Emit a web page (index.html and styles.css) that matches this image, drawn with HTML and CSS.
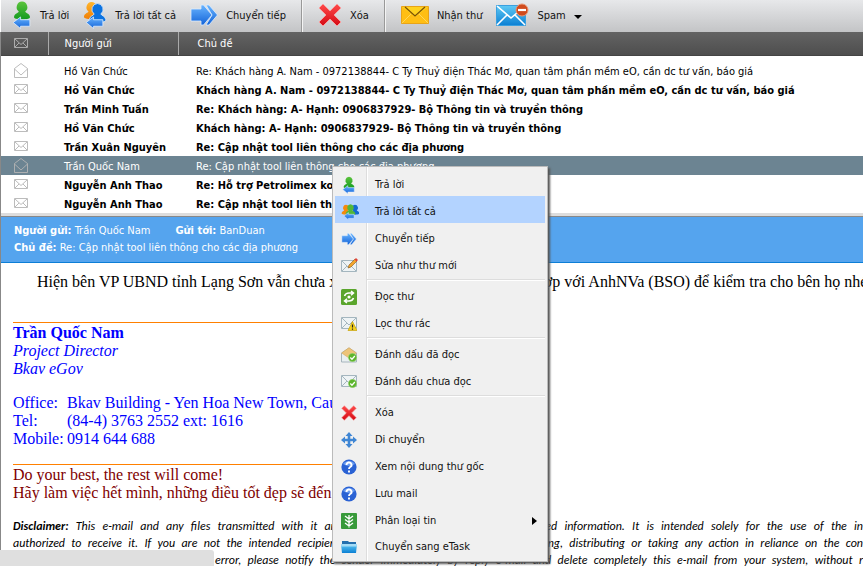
FILE: index.html
```html
<!DOCTYPE html>
<html lang="vi">
<head>
<meta charset="utf-8">
<title>Thư</title>
<link rel="stylesheet" href="styles.css">
</head>
<body>
<svg class="defs" width="0" height="0" aria-hidden="true">
  <defs>
    <linearGradient id="gGreen" x1="0" y1="0" x2="0" y2="1"><stop offset="0" stop-color="#5cc43c"/><stop offset="1" stop-color="#149a20"/></linearGradient>
    <linearGradient id="gBlue" x1="0" y1="0" x2="0" y2="1"><stop offset="0" stop-color="#68b4ff"/><stop offset="1" stop-color="#1464d8"/></linearGradient>
    <linearGradient id="gOrange" x1="0" y1="0" x2="0" y2="1"><stop offset="0" stop-color="#ffb52a"/><stop offset="1" stop-color="#f07f08"/></linearGradient>
    <linearGradient id="gRed" x1="0" y1="0" x2="0" y2="1"><stop offset="0" stop-color="#ff4a4a"/><stop offset="1" stop-color="#d40a14"/></linearGradient>
    <linearGradient id="gSky" x1="0" y1="0" x2="0" y2="1"><stop offset="0" stop-color="#5fc9f4"/><stop offset="1" stop-color="#0c80d4"/></linearGradient>
    <symbol id="person" viewBox="0 0 18 20"><path d="M9 .5a5.600 5.600 0 0 1 3.200 10c.3 1.500 4.300 1.800 4.800 5.500.2 1.600-3 2.500-8 2.500s-8.200-1-8-2.500c.5-3.700 4.500-4 4.800-5.500A5.600 5.600 0 0 1 9 .5z"/></symbol>
    <symbol id="back" viewBox="0 0 20 14"><path d="M1 7l8-6v3h10v7h-10v2.500z" fill="url(#gBlue)" stroke="#e6f2ff" stroke-width=".8"/></symbol>
    <symbol id="forward" viewBox="0 0 28 22"><path d="M16 1h3l8.500 10L19 21h-3l6-10z" fill="url(#gBlue)" stroke="#dcecff" stroke-width=".8"/><path d="M1 5h10V1h2.500L22 11l-8.500 10H11v-4H1z" fill="url(#gBlue)" stroke="#dcecff" stroke-width=".8"/></symbol>
    <symbol id="cross" viewBox="0 0 24 24"><path d="M5 1l7 7 7-7 4 4-7 7 7 7-4 4-7-7-7 7-4-4 7-7-7-7z" fill="url(#gRed)" stroke="#f6a0a0" stroke-width="1" stroke-linejoin="round"/></symbol>
    <symbol id="closed" viewBox="0 0 14 10"><path d="M.5.500h13v9H.500zM1 1l6 5.500L13 1M1 9l4-4M13 9L9 5" fill="none" stroke="currentColor" stroke-width=".9"/></symbol>
    <symbol id="open" viewBox="0 0 14 15"><path d="M.5 5.500v9h13v-9L7 .500zM.5 6L7 12l6.500-6" fill="none" stroke="currentColor" stroke-width=".9"/></symbol>
    <symbol id="mail" viewBox="0 0 16 16"><path d="M.5 2.500h15v11H.500z" fill="#eef3f5" stroke="#a4b6bf"/><path d="M1 3l7 7 7-7M1 13l5-5M15 13l-5-5" fill="none" stroke="#a4b6bf"/></symbol>
    <symbol id="tick" viewBox="0 0 10 10"><circle cx="5" cy="5" r="4.600" fill="#5cb52c" stroke="#a6da82" stroke-width=".6"/><path d="M2.600 5l1.800 1.900L7.600 3.300" fill="none" stroke="#fff" stroke-width="1.400"/></symbol>
    <symbol id="help" viewBox="0 0 16 16"><circle cx="8" cy="8" r="7.600" fill="#2a62d4"/><path d="M2 5a7 6 0 0 1 12 0q-6 4-12 0z" fill="#6a9cf0"/><path d="M5.500 6a2.500 2.400 0 1 1 3.700 2q-1.200.7-1.200 2M8 11.500v2" fill="none" stroke="#fff" stroke-width="1.900"/></symbol>
  </defs>
</svg>

<header class="toolbar">
  <div class="group">
    <button class="tool" type="button"><svg width="20" height="29" viewBox="0 0 20 29"><use href="#person" x="1" y="0" width="18" height="20" fill="url(#gGreen)"/><use href="#back" x="0" y="15" width="19" height="13"/></svg><span>Trả lời</span></button>
    <button class="tool" type="button"><svg width="24" height="29" viewBox="0 0 24 29"><use href="#person" x="0" y="0" width="17" height="20" fill="url(#gOrange)"/><use href="#person" x="5" y="2" width="19" height="21" fill="#0b72e0" stroke="#dfe9f5" stroke-width=".8"/><use href="#back" x="2" y="15" width="19" height="13"/></svg><span>Trả lời tất cả</span></button>
    <button class="tool" type="button"><svg width="28" height="22"><use href="#forward"/></svg><span>Chuyển tiếp</span></button>
  </div>
  <div class="group">
    <button class="tool" type="button"><svg width="24" height="24"><use href="#cross"/></svg><span>Xóa</span></button>
  </div>
  <div class="group">
    <button class="tool" type="button"><svg width="28" height="20" viewBox="0 0 28 20"><path d="M.5 1.500h27v17H.500z" fill="#ffbe14" stroke="#e8a418"/><path d="M1 18L10 9M27 18L18 9" stroke="#ffd75a"/><path d="M1 2h26L14 12z" fill="#ffd21e"/><path d="M4 2l10 9L24 2" fill="none" stroke="#7c5206" stroke-width="1.300"/></svg><span>Nhận thư</span></button>
    <button class="tool" type="button"><svg width="33" height="24" viewBox="0 0 33 24"><path d="M.5 2.500h29v20H.500z" fill="url(#gSky)" stroke="#3aa0e0"/><path d="M1 3l14 12L29 3M1 22l10-10M29 22L19 12" fill="none" stroke="#fff" stroke-width="1.600"/><circle cx="26" cy="7" r="6" fill="#d04a1c" stroke="#e89470"/><path d="M22 7h8" stroke="#fff" stroke-width="2.200"/></svg><span>Spam</span><svg class="caret" width="8" height="4"><path d="M0 0h8L4 4z"/></svg></button>
  </div>
</header>

<main class="client">
  <table class="mails">
    <thead>
      <tr><th class="status" aria-label="Trạng thái"><svg width="14" height="10"><use href="#closed"/></svg></th><th class="sender">Người gửi</th><th>Chủ đề</th></tr>
    </thead>
    <tbody>
      <tr class="unread clipped"><td class="status"></td><td><div>Hoàng Quý</div></td><td><div>Cấp phép sử dụng phần mềm, lịch họp dự án tại đơn vị, nâng cấp</div></td></tr>
      <tr><td class="status"><svg width="14" height="15"><use href="#open"/></svg></td><td>Hồ Văn Chức</td><td>Re: Khách hàng A. Nam - 0972138844- C Ty Thuỷ điện Thác Mơ, quan tâm phần mềm eO, cần dc tư vấn, báo giá</td></tr>
      <tr class="unread"><td class="status"><svg width="14" height="10"><use href="#closed"/></svg></td><td>Hồ Văn Chức</td><td>Khách hàng A. Nam - 0972138844- C Ty Thuỷ điện Thác Mơ, quan tâm phần mềm eO, cần dc tư vấn, báo giá</td></tr>
      <tr class="unread"><td class="status"><svg width="14" height="10"><use href="#closed"/></svg></td><td>Trần Minh Tuấn</td><td>Re: Khách hàng: A- Hạnh: 0906837929- Bộ Thông tin và truyền thông</td></tr>
      <tr class="unread"><td class="status"><svg width="14" height="10"><use href="#closed"/></svg></td><td>Hồ Văn Chức</td><td>Khách hàng: A- Hạnh: 0906837929- Bộ Thông tin và truyền thông</td></tr>
      <tr class="unread"><td class="status"><svg width="14" height="10"><use href="#closed"/></svg></td><td>Trần Xuân Nguyên</td><td>Re: Cập nhật tool liên thông cho các địa phương</td></tr>
      <tr class="selected"><td class="status"><svg width="14" height="15"><use href="#open"/></svg></td><td>Trần Quốc Nam</td><td>Re: Cập nhật tool liên thông cho các địa phương</td></tr>
      <tr class="unread"><td class="status"><svg width="14" height="10"><use href="#closed"/></svg></td><td>Nguyễn Anh Thao</td><td>Re: Hỗ trợ Petrolimex kon tum</td></tr>
      <tr class="unread"><td class="status"><svg width="14" height="10"><use href="#closed"/></svg></td><td>Nguyễn Anh Thao</td><td>Re: Cập nhật tool liên thông</td></tr>
    </tbody>
  </table>

  <section class="summary">
    <div class="people"><span><b>Người gửi:</b> Trần Quốc Nam</span><span><b>Gửi tới:</b> BanDuan</span></div>
    <div><b>Chủ đề:</b> Re: Cập nhật tool liên thông cho các địa phương</div>
  </section>

  <article class="message">
    <p class="lead">Hiện bên VP UBND tỉnh Lạng Sơn vẫn chưa xử lý được văn bản, chị đã phối hợp với AnhNVa (BSO) để kiểm tra cho bên họ nhé</p>
    <div class="signature">
      <b>Trần Quốc Nam</b>
      <i>Project Director</i>
      <i>Bkav eGov</i>
      <dl>
        <dt>Office:</dt><dd>Bkav Building - Yen Hoa New Town, Cau Giay</dd>
        <dt>Tel:</dt><dd>(84-4) 3763 2552 ext: 1616</dd>
        <dt>Mobile:</dt><dd>0914 644 688</dd>
      </dl>
    </div>
    <div class="motto">Do your best, the rest will come!<br>Hãy làm việc hết mình, những điều tốt đẹp sẽ đến</div>
    <div class="disclaimer">
      <p><b>Disclaimer:</b> This e-mail and any files transmitted with it are confidential and may contain privileged information. It is intended solely for the use of the in</p>
      <p>authorized to receive it. If you are not the intended recipient, you are notified that disclosing, copying, distributing or taking any action in reliance on the con</p>
      <p>If you have received this message in error, please notify the sender immediately by reply e-mail and delete completely this e-mail from your system, without r</p>
    </div>
  </article>
</main>

<nav class="menu" aria-label="Thao tác thư">
  <button type="button"><svg width="16" height="18" viewBox="0 0 16 18"><use href="#person" x="2" y="0" width="12" height="14" fill="url(#gGreen)"/><use href="#back" x="1" y="9" width="13" height="9"/></svg><span>Trả lời</span></button>
  <button type="button" class="active"><svg width="18" height="17" viewBox="0 0 18 17"><use href="#person" x="0" y="1" width="10" height="12" fill="#f58a0c"/><use href="#person" x="9" y="1" width="10" height="12" fill="#126bd2"/><use href="#person" x="4" y="0" width="11" height="14" fill="#52b838"/><use href="#back" x="2" y="9" width="12" height="8"/></svg><span>Trả lời tất cả</span></button>
  <button type="button"><svg width="16" height="12"><use href="#forward"/></svg><span>Chuyển tiếp</span></button>
  <button type="button"><svg width="17" height="16" viewBox="0 0 17 16"><use href="#mail" x="0" y="0" width="16" height="16"/><path d="M7 10l1-3 6-6 2 2-6 6z" fill="#f3a52c" stroke="#875a25" stroke-width=".6"/><path d="M13.500 1.500L15 0l2 2-1.500 1.500z" fill="#df4338"/></svg><span>Sửa như thư mới</span></button>
  <hr>
  <button type="button"><svg width="16" height="16" viewBox="0 0 16 16"><rect width="16" height="16" rx="1.500" fill="#5aa52c"/><path d="M3.500 7Q4.500 4 8 4h4M10 2l2.500 2L10 6.200M12.500 9Q11.500 12 8 12H4M6 9.800L3.500 12 6 14" fill="none" stroke="#fff" stroke-width="1.500"/><circle cx="8" cy="8" r="1.600" fill="#fff"/></svg><span>Đọc thư</span></button>
  <button type="button"><svg width="16" height="16" viewBox="0 0 16 16"><use href="#mail" x="0" y="-1" width="16" height="16"/><path d="M11.500 5.500L16 14.500H7z" fill="#f5d21e" stroke="#c6a20c" stroke-width=".7"/><path d="M11.500 8.500v3M11.500 12.500v1.200" stroke="#222" stroke-width="1.200"/></svg><span>Lọc thư rác</span></button>
  <hr>
  <button type="button"><svg width="16" height="16" viewBox="0 0 16 16"><path d="M.5 6L8 1l7.500 5v9H.500z" fill="#e9eff1" stroke="#a6b5bd"/><path d="M.7 6L8 .700 15.300 6 8 11z" fill="#edc47a" stroke="#d7a858" stroke-width=".6"/><use href="#tick" x="7" y="6" width="9" height="9"/></svg><span>Đánh dấu đã đọc</span></button>
  <button type="button"><svg width="16" height="16" viewBox="0 0 16 16"><use href="#mail" x="0" y="-1" width="16" height="16"/><use href="#tick" x="7" y="5" width="9" height="9"/></svg><span>Đánh dấu chưa đọc</span></button>
  <hr>
  <button type="button"><svg width="16" height="16"><use href="#cross"/></svg><span>Xóa</span></button>
  <button type="button"><svg width="16" height="16" viewBox="0 0 16 16"><path d="M8 0l3.500 4H9.300v2.700H12V4.500L16 8l-4 3.500V9.300H9.300V12h2.200L8 16l-3.500-4h2.200V9.300H4v2.200L0 8l4-3.500v2.200h2.700V4H4.500z" fill="#3f86d4"/></svg><span>Di chuyển</span></button>
  <button type="button"><svg width="16" height="16"><use href="#help"/></svg><span>Xem nội dung thư gốc</span></button>
  <button type="button"><svg width="16" height="16"><use href="#help"/></svg><span>Lưu mail</span></button>
  <button type="button"><svg width="16" height="16" viewBox="0 0 16 16"><rect width="16" height="16" rx="1" fill="#389a3a"/><path d="M8 2v12.500M4 3l4 3 4-3M4 6.500l4 3 4-3M4 10l4 3 4-3" fill="none" stroke="#fff" stroke-width="1.300"/></svg><span>Phân loại tin</span><svg class="sub" width="5" height="8"><path d="M0 0l5 4-5 4z"/></svg></button>
  <button type="button" class="last"><svg width="16" height="12" viewBox="0 0 16 12"><path d="M1 0h6l1 1h7v4H1z" fill="#236fae"/><path d="M0 3h16l-1 9H1z" fill="url(#gSky)"/><path d="M0 3h16l-.3 2.500H.300z" fill="#a5dcf6"/></svg><span>Chuyển sang eTask</span></button>
</nav>

<div class="statusbar"></div>
</body>
</html>
```
FILE: styles.css
```css
* { box-sizing: border-box; }

body {
  position: relative;
  height: 100vh;
  margin: 0;
  overflow: hidden;
  background: #fff;
  color: #000;
  font-family: "DejaVu Sans Condensed", "DejaVu Sans", sans-serif;
  font-size: 11px;
}

.defs { position: absolute; }

button {
  padding: 0;
  border: 0;
  background: none;
  color: #111;
  font: inherit;
}

/* Toolbar */
.toolbar {
  display: flex;
  height: 32px;
  margin-left: 1px;
  background: linear-gradient(#e7e8ea, #c3c4c6);
}

.group {
  display: flex;
  align-items: center;
  gap: 14px;
  padding: 0 15px 2px 11px;
}

.group + .group {
  padding-left: 16px;
  border-left: 1px solid #999;
  box-shadow: inset 1px 0 #f4f4f4;
}

.tool {
  display: flex;
  align-items: center;
  gap: 8px;
  white-space: nowrap;
}

.caret { margin-top: 4px; }

/* Mail list */
.client { border-left: 1px solid #888; }

.mails {
  width: 100%;
  table-layout: fixed;
  border-collapse: collapse;
}

.mails tr { height: 19px; }

.mails th,
.mails td {
  padding: 0;
  text-align: left;
  line-height: 17px;
  white-space: nowrap;
}

.mails thead tr {
  height: 23px;
  background: linear-gradient(#636363, #4e4e4e);
  color: #fff;
}

.mails th {
  padding-left: 19px;
  border-bottom: 1px solid #444;
  font-weight: normal;
}

.mails th + th { border-left: 1px solid #aaa; }

.mails .sender { width: 130px; padding-left: 16px; }

.mails .status {
  width: 47px;
  padding: 0 0 0 13px;
  color: #b4b4b4;
}

.mails td { padding: 2px 0 0 18px; }
.mails td:nth-child(2) { padding-left: 16px; }

.status svg { display: block; }

.unread { font-weight: bold; }

.mails .selected {
  background: #6c8492;
  color: #fff;
}

.mails .clipped { height: 5px; }
.mails .clipped td { padding-top: 0; }

.clipped div {
  display: flex;
  align-items: flex-end;
  height: 5px;
  overflow: hidden;
  line-height: 21px;
}

/* Message summary */
.summary {
  padding: 5px 13px 6px;
  border-top: 1px solid #888;
  border-bottom: 1px solid #0c7ed6;
  margin-top: 3px;
  box-shadow: 0 -3px #ddd;
  background: #55a4ee;
  color: #fff;
  line-height: 17px;
}

.people {
  display: flex;
  gap: 25px;
}

/* Message body */
.message {
  padding: 10px 0 0 12px;
  font-family: "Liberation Serif", serif;
  font-size: 16px;
  line-height: 18px;
  white-space: nowrap;
}

.lead {
  margin: 0 0 31px;
  padding-left: 24px;
}

.signature,
.motto {
  width: 60%;
  max-width: 420px;
  border-top: 1px solid #ff8000;
}

.signature {
  padding-top: 1px;
  margin-bottom: 16px;
  color: #00f;
}

.signature b,
.signature i { display: block; }

.signature dl {
  display: grid;
  grid-template-columns: 54px 1fr;
  margin: 16px 0 0;
}

.signature dd { margin: 0; }

.motto {
  padding-top: 1px;
  color: #800000;
}

.disclaimer {
  margin-top: 16px;
  font-family: Carlito, Lato, sans-serif;
  font-size: 12px;
  font-style: italic;
  line-height: 17px;
}

.disclaimer p {
  margin: 0;
  text-align-last: justify;
}

/* Context menu */
.menu {
  position: absolute;
  top: 166px;
  left: 332px;
  width: 216px;
  padding: 2px 2px 4px;
  border: 1px solid #bbb;
  background: linear-gradient(90deg, #f0f0f0 33px, #ddd 33px, #ddd 34px, #fff 34px, #fff 35px, #f0f0f0 35px);
  box-shadow: 2px 2px 2px #555;
}

.menu button {
  display: grid;
  grid-template-columns: 28px 1fr auto;
  align-items: center;
  gap: 6px;
  width: 100%;
  height: 27px;
  padding: 4px 8px 0 6px;
  text-align: left;
}

.menu button.last { height: 25px; }

.menu .active { background: #b3d3ff; }

.menu hr {
  height: 2px;
  margin: 2px 0 0 32px;
  border: 0;
  border-top: 1px solid #ddd;
  background: #fff;
}

.statusbar {
  position: absolute;
  bottom: 0;
  left: 0;
  width: 214px;
  height: 16px;
  border-top-right-radius: 3px;
  background: #dfdfdf;
}
```
